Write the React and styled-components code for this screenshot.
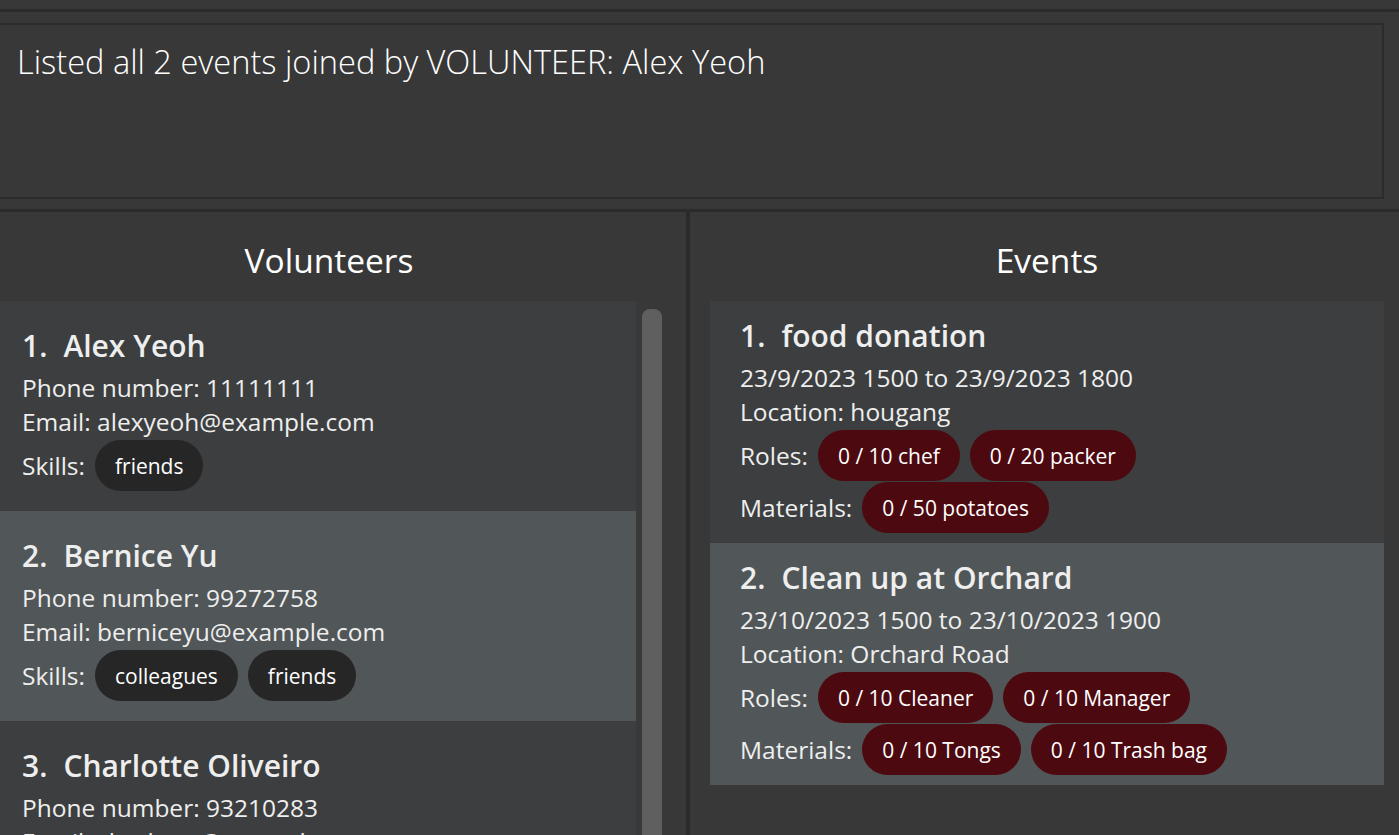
import styled, { createGlobalStyle } from "styled-components";

const GlobalStyle = createGlobalStyle`
  html, body {
    margin: 0;
    padding: 0;
    background: #383838;
    overflow: hidden;
  }
  body {
    font-family: "Open Sans", "Noto Sans", sans-serif;
    color: #ffffff;
  }
`;

const volunteers = [
  {
    name: "Alex Yeoh",
    phone: "11111111",
    email: "alexyeoh@example.com",
    skills: ["friends"],
  },
  {
    name: "Bernice Yu",
    phone: "99272758",
    email: "berniceyu@example.com",
    skills: ["colleagues", "friends"],
  },
  {
    name: "Charlotte Oliveiro",
    phone: "93210283",
    email: "charlotte@example.com",
    skills: ["neighbours"],
  },
];

const events = [
  {
    name: "food donation",
    time: "23/9/2023 1500 to 23/9/2023 1800",
    location: "hougang",
    roles: ["0 / 10 chef", "0 / 20 packer"],
    materials: ["0 / 50 potatoes"],
  },
  {
    name: "Clean up at Orchard",
    time: "23/10/2023 1500 to 23/10/2023 1900",
    location: "Orchard Road",
    roles: ["0 / 10 Cleaner", "0 / 10 Manager"],
    materials: ["0 / 10 Tongs", "0 / 10 Trash bag"],
  },
];

const Window = styled.div`
  width: 1399px;
  height: 835px;
  display: flex;
  flex-direction: column;
  background: #383838;
  overflow: hidden;
`;

const MenuGap = styled.div`
  height: 9px;
  flex-shrink: 0;
`;

const Separator = styled.div`
  height: 3px;
  background: #2b2b2b;
  flex-shrink: 0;
`;

const ResultArea = styled.div`
  padding: 11px 15px 10px 0;
  height: 176px;
  flex-shrink: 0;
`;

const ResultBox = styled.div`
  height: 100%;
  box-sizing: border-box;
  border: 2px solid #2b2b2b;
  border-left: none;
  padding: 17px 17px;
  font-size: 32.6px;
  font-weight: 300;
  color: #ffffff;
  line-height: 1.2;
`;

const Panels = styled.div`
  flex: 1;
  display: grid;
  grid-template-columns: 686px 4px 1fr;
  min-height: 0;
`;

const Divider = styled.div`
  background: #2b2b2b;
`;

const Panel = styled.section`
  display: flex;
  flex-direction: column;
  min-height: 0;
  padding: ${(p) => (p.$right ? "0 15px 0 20px" : "0 24px 0 0")};
`;

const PanelTitle = styled.h2`
  margin: 0;
  height: 89px;
  display: flex;
  align-items: center;
  justify-content: center;
  font-size: 33.5px;
  font-weight: 400;
  color: #ffffff;
  padding-top: 6px;
  padding-right: ${(p) => (p.$shift ? "4px" : "0")};
  box-sizing: border-box;
`;

const ListWrap = styled.div`
  flex: 1;
  display: flex;
  min-height: 0;
`;

const List = styled.div`
  flex: 1;
  display: flex;
  flex-direction: column;
  min-width: 0;
`;

const ScrollTrack = styled.div`
  width: 26px;
  display: flex;
  padding: 8px 0 0 6px;
  box-sizing: border-box;
  background: linear-gradient(to right, #393939 6px, transparent 6px);
`;

const ScrollThumb = styled.div`
  width: 20px;
  height: 100%;
  background: #5f5f5f;
  border-radius: 8px 8px 0 0;
`;

const Card = styled.div`
  background: ${(p) => (p.$alt ? "#515658" : "#3c3e3f")};
  padding: ${(p) => (p.$event ? "17px 30px 10px" : "27px 22px 20px")};
  display: flex;
  flex-direction: column;
  flex-shrink: 0;
`;

const CardTitle = styled.div`
  font-size: 30px;
  font-weight: 600;
  color: #eeeeee;
  line-height: 36px;
  display: flex;
  margin-bottom: 7px;
`;

const Index = styled.span`
  margin-right: 16px;
`;

const Detail = styled.div`
  font-size: 24.5px;
  color: #eeeeee;
  line-height: 34px;
  white-space: nowrap;
`;

const TagRow = styled.div`
  display: flex;
  align-items: center;
  gap: 10px;
  margin-top: 1px;
`;

const TagLabel = styled.span`
  font-size: 24.5px;
  color: #eeeeee;
`;

const Tag = styled.span`
  height: 51px;
  box-sizing: border-box;
  padding: 0 20px;
  display: inline-flex;
  align-items: center;
  border-radius: 26px;
  background: ${(p) => (p.$event ? "#4d0910" : "#262626")};
  color: #ffffff;
  font-size: 21px;
  font-weight: 500;
`;

function VolunteerCard({ v, i }) {
  return (
    <Card $alt={i % 2 === 1}>
      <CardTitle>
        <Index>{i + 1}.</Index>
        {v.name}
      </CardTitle>
      <Detail>Phone number: {v.phone}</Detail>
      <Detail>Email: {v.email}</Detail>
      <TagRow>
        <TagLabel>Skills:</TagLabel>
        {v.skills.map((s) => (
          <Tag key={s}>{s}</Tag>
        ))}
      </TagRow>
    </Card>
  );
}

function EventCard({ e, i }) {
  return (
    <Card $event $alt={i % 2 === 1}>
      <CardTitle>
        <Index>{i + 1}.</Index>
        {e.name}
      </CardTitle>
      <Detail>{e.time}</Detail>
      <Detail>Location: {e.location}</Detail>
      <TagRow>
        <TagLabel>Roles:</TagLabel>
        {e.roles.map((r) => (
          <Tag $event key={r}>
            {r}
          </Tag>
        ))}
      </TagRow>
      <TagRow>
        <TagLabel>Materials:</TagLabel>
        {e.materials.map((m) => (
          <Tag $event key={m}>
            {m}
          </Tag>
        ))}
      </TagRow>
    </Card>
  );
}

export default function App() {
  return (
    <>
      <GlobalStyle />
      <Window>
        <MenuGap />
        <Separator />
        <ResultArea>
          <ResultBox>Listed all 2 events joined by VOLUNTEER: Alex Yeoh</ResultBox>
        </ResultArea>
        <Separator />
        <Panels>
          <Panel>
            <PanelTitle $shift>Volunteers</PanelTitle>
            <ListWrap>
              <List>
                {volunteers.map((v, i) => (
                  <VolunteerCard key={v.name} v={v} i={i} />
                ))}
              </List>
              <ScrollTrack>
                <ScrollThumb />
              </ScrollTrack>
            </ListWrap>
          </Panel>
          <Divider />
          <Panel $right>
            <PanelTitle>Events</PanelTitle>
            <ListWrap>
              <List>
                {events.map((e, i) => (
                  <EventCard key={e.name} e={e} i={i} />
                ))}
              </List>
            </ListWrap>
          </Panel>
        </Panels>
      </Window>
    </>
  );
}
